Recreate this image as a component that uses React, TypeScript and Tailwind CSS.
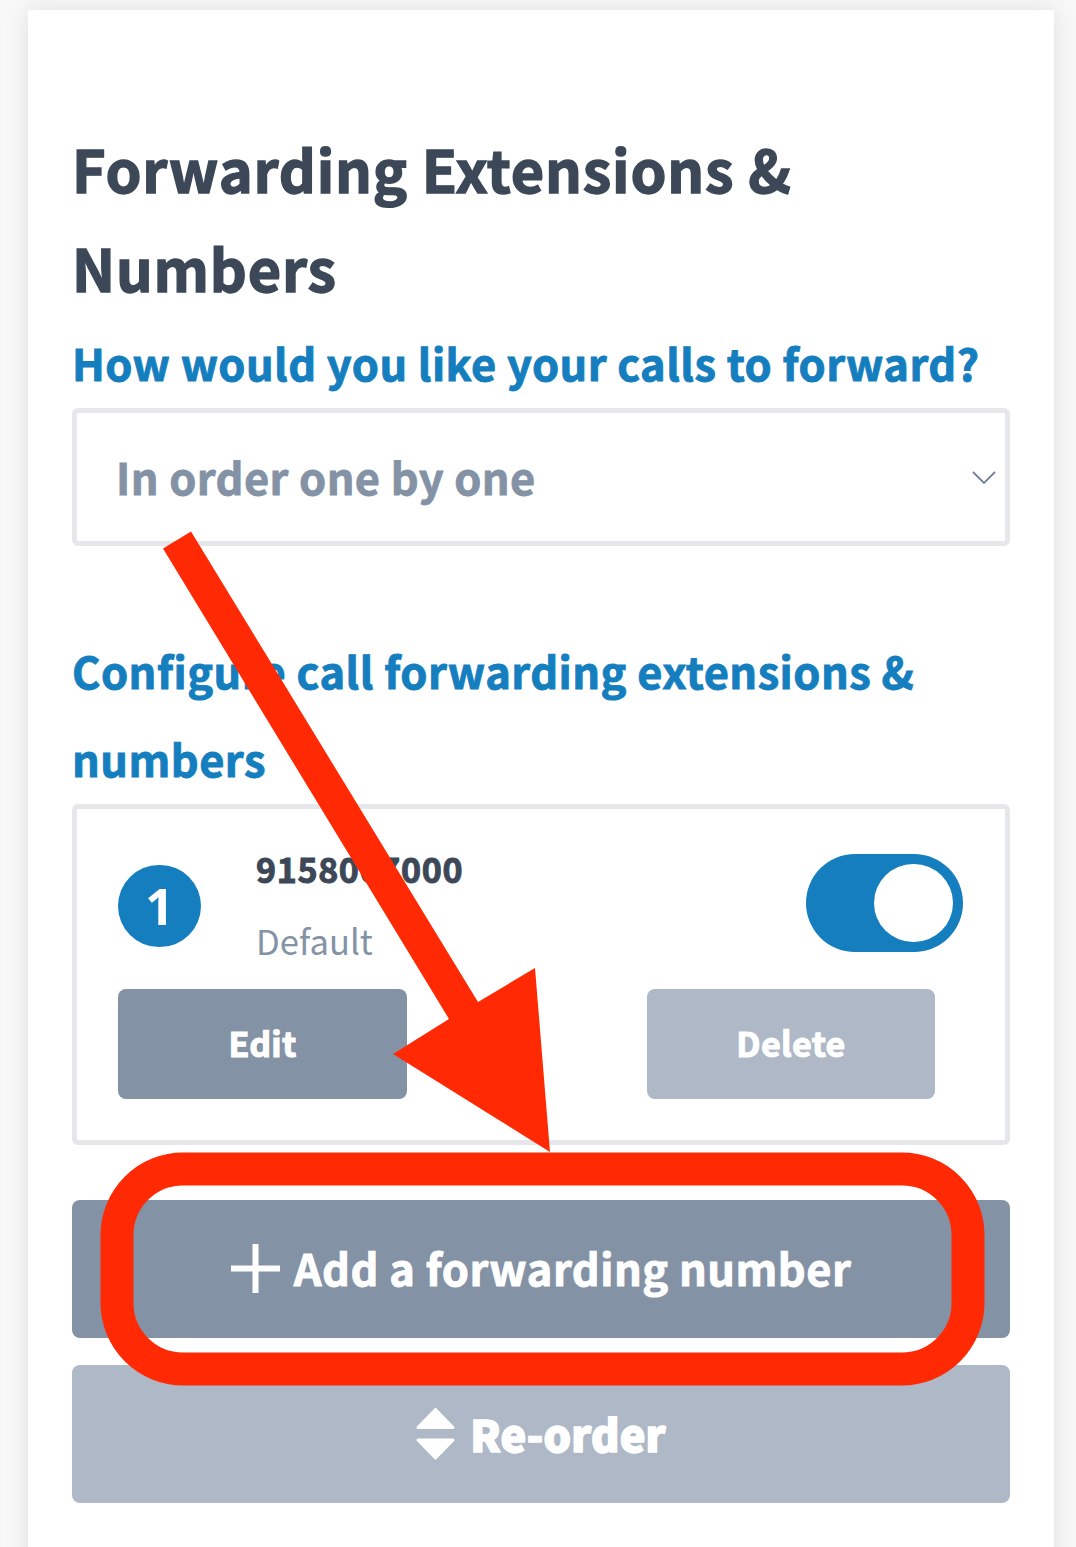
export default function App() {
  return (
    <div className="flex h-[1547px] w-[1076px] overflow-hidden bg-[#f8f8f8] pl-7 pt-2.5 font-['Noto_Sans_CJK_SC','Noto_Sans',sans-serif] font-bold">
      <main className="relative h-[1600px] w-[1026px] bg-white px-11 pt-[109px] shadow-[0_0_24px_rgba(0,0,0,0.1)]">
        <h1 className="h-[201px] whitespace-nowrap text-[57.6px] leading-[99px] tracking-[0.82px] text-[#3c4858] [-webkit-text-stroke:1.4px_#3c4858]">
          Forwarding Extensions &amp;
          <br />
          Numbers
        </h1>
        <h2 className="h-[88px] whitespace-nowrap text-[43.4px] leading-[84px] tracking-[0.45px] text-[#147ebe] [-webkit-text-stroke:0.9px_#147ebe]">
          How would you like your calls to forward?
        </h2>
        <div className="flex h-[138px] items-center justify-between rounded-md border-[5px] border-[#e5e7ea] pl-[39px] pr-[9px]">
          <span className="text-[43.4px] leading-none tracking-[0.4px] text-[#8492a6] [-webkit-text-stroke:0.8px_#8492a6]">In order one by one</span>
          <svg className="mt-0.5" width="24" height="14" viewBox="0 0 24 14" fill="none" stroke="#76809a" strokeWidth="1.8">
            <path d="M1 1l11 11L23 1" />
          </svg>
        </div>
        <h2 className="mt-[80px] h-[178px] whitespace-nowrap text-[43.4px] leading-[88px] tracking-[0.48px] text-[#147ebe] [-webkit-text-stroke:0.9px_#147ebe]">
          Configure call forwarding extensions &amp;
          <br />
          numbers
        </h2>
        <section className="h-[341px] rounded-md border-[5px] border-[#e5e7ea] pl-[41px] pr-[42px] pt-[45px]">
          <div className="flex h-[135px]">
            <div className="mt-[11px] flex h-[82px] w-[83px] items-center justify-center rounded-full bg-[#147ebe] font-['Open_Sans',sans-serif] text-[50px] leading-none text-white">1</div>
            <div className="ml-[55px] mt-[-12px]">
              <div className="text-[34px] leading-[54px] tracking-[0.65px] text-[#3c4858] [-webkit-text-stroke:1px_#3c4858]">9158067000</div>
              <div className="mt-[17px] text-[34.6px] font-normal leading-[54px] text-[#8492a6]">Default</div>
            </div>
            <div className="ml-auto flex h-[98px] w-[157px] justify-end rounded-full bg-[#147ebe] p-[10px]">
              <div className="h-[78px] w-[79px] rounded-full bg-white" />
            </div>
          </div>
          <div className="flex gap-60 text-[34px] tracking-[0.3px] text-white [-webkit-text-stroke:1.1px_white]">
            <button className="h-[110px] w-[289px] rounded-[8px] bg-[#8492a6] pb-1">Edit</button>
            <button className="h-[110px] w-[288px] rounded-[8px] bg-[#aeb8c7] pb-1">Delete</button>
          </div>
        </section>
        <button className="mt-[55px] flex h-[138px] w-full items-center justify-center gap-[14px] rounded-[8px] bg-[#8492a6] pb-0.5 text-[43.4px] tracking-[0.5px] text-white [-webkit-text-stroke:0.9px_white]">
          <svg width="49" height="49" viewBox="0 0 49 49" stroke="white" strokeWidth="6">
            <path d="M24.5 0v49M0 24.5h49" />
          </svg>
          Add a forwarding number
        </button>
        <button className="mt-[27px] flex h-[138px] w-full items-center justify-center gap-[15px] rounded-[8px] bg-[#aeb8c7] pb-0.5 text-[43.2px] font-black tracking-[0.2px] text-white [-webkit-text-stroke:1.6px_white]">
          <svg className="mt-0.5" width="39" height="52" viewBox="0 0 39 52" fill="white" stroke="white" strokeWidth="3" strokeLinejoin="round">
            <path d="M19.5 1.5L37 19.5H2zM2 32h35L19.5 50z" />
          </svg>
          Re-order
        </button>
        <svg className="pointer-events-none absolute -left-7 -top-2.5" width="1076" height="1547" viewBox="0 0 1076 1547">
          <path fill="#ff2a04" d="M163 548.5L191 531.5L478 1002L535 968L550 1152L393 1054L449 1019Z" />
          <rect x="117" y="1169" width="851" height="200" rx="66" fill="none" stroke="#ff2a04" strokeWidth="33" />
        </svg>
      </main>
    </div>
  );
}
